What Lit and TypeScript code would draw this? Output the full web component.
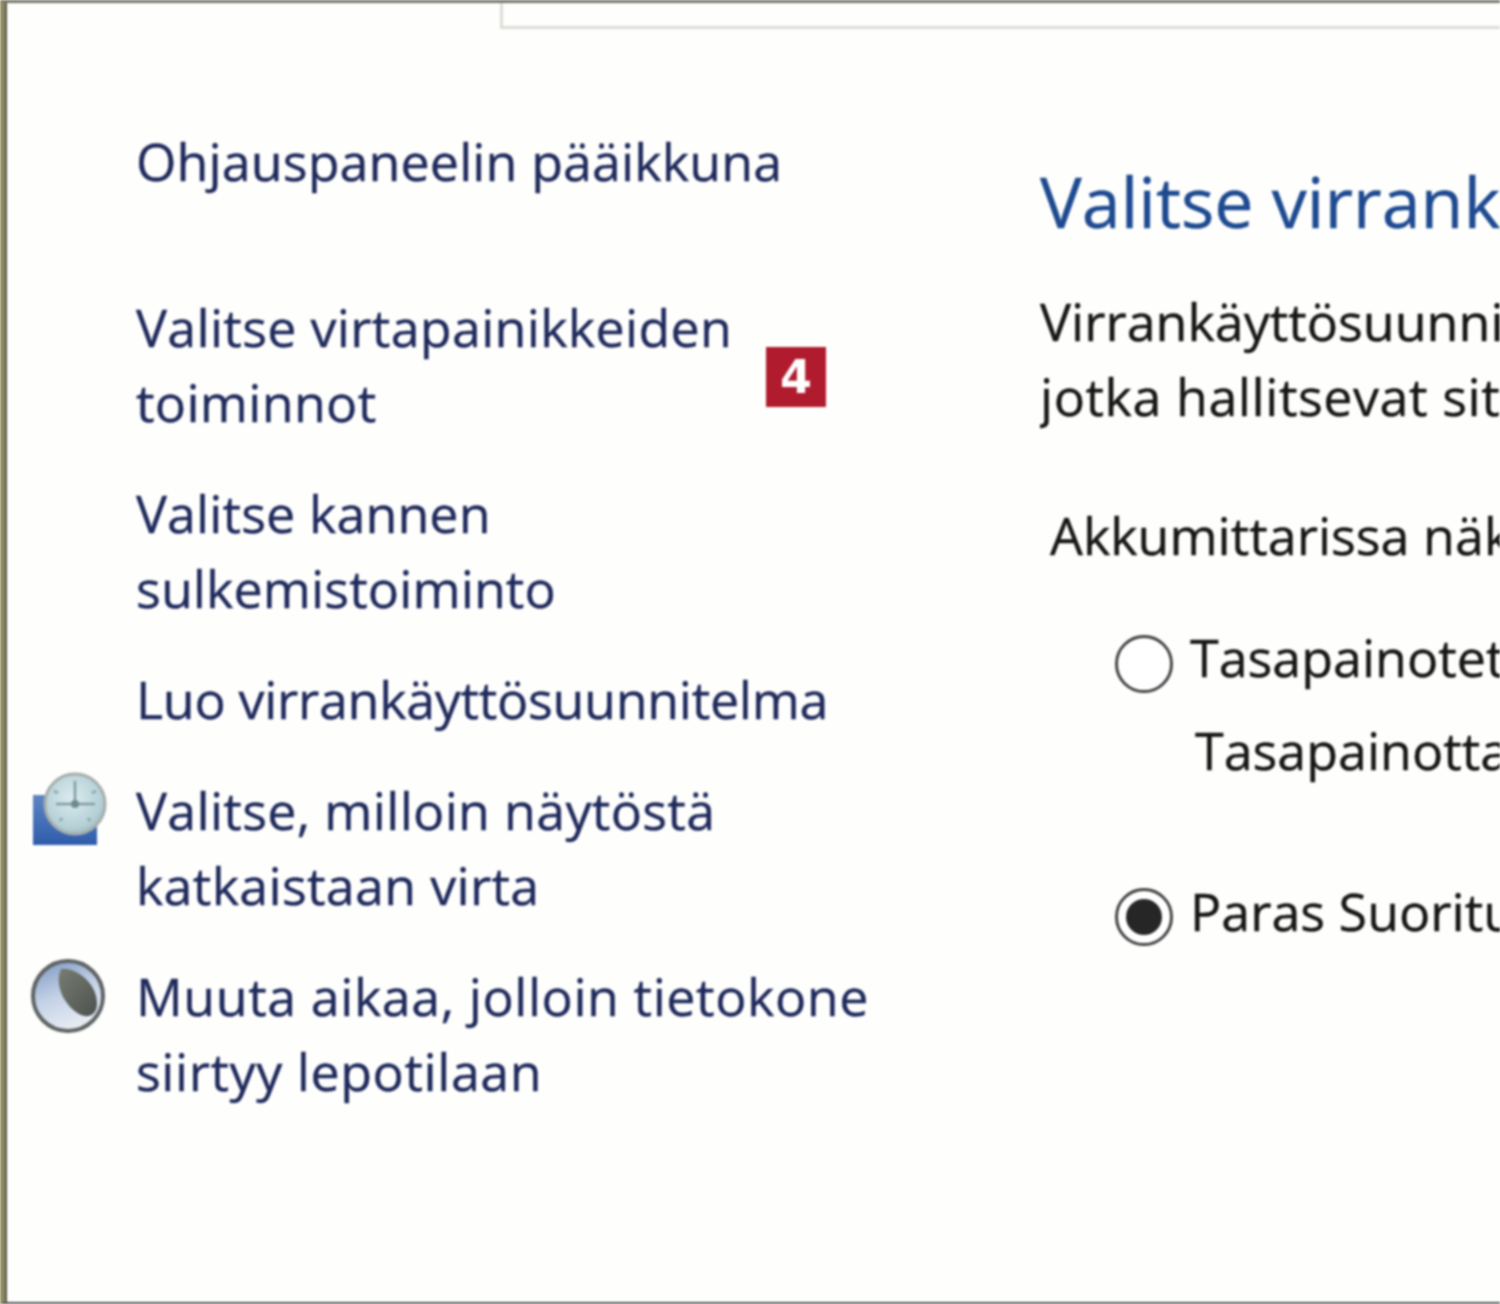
import { LitElement, html, css, svg } from 'lit';
import { customElement } from 'lit/decorators.js';

const clockIcon = svg`
  <svg class="icon" viewBox="0 0 80 76" width="80" height="76">
    <defs>
      <linearGradient id="screen" x1="0" y1="0" x2="0" y2="1">
        <stop offset="0" stop-color="#5f86c4" />
        <stop offset="1" stop-color="#2f5cab" />
      </linearGradient>
      <radialGradient id="face" cx="0.45" cy="0.4" r="0.7">
        <stop offset="0" stop-color="#dcecef" />
        <stop offset="0.7" stop-color="#b4d0d6" />
        <stop offset="1" stop-color="#96adb1" />
      </radialGradient>
    </defs>
    <rect x="3" y="24" width="64" height="50" fill="url(#screen)" />
    <circle cx="45" cy="33" r="30" fill="url(#face)" stroke="#a6aeac" stroke-width="3" />
    <path d="M45 10V33M45 33H65M26 33H45" stroke="#7f9ca3" stroke-width="2.5" fill="none" />
    <circle cx="45" cy="33" r="4" fill="#6f8b92" />
    <path d="M24 20l4 2M30 50l2-3M60 50l-2-3M66 20l-4 2" stroke="#8eaab0" stroke-width="3" />
  </svg>
`;

const moonIcon = svg`
  <svg class="icon" viewBox="0 0 80 76" width="80" height="76">
    <defs>
      <linearGradient id="disc" x1="0" y1="0" x2="0.4" y2="1">
        <stop offset="0" stop-color="#7795c2" />
        <stop offset="0.55" stop-color="#c3d1e6" />
        <stop offset="1" stop-color="#e6ebf2" />
      </linearGradient>
      <linearGradient id="shade" x1="0" y1="0" x2="1" y2="1">
        <stop offset="0" stop-color="#777d70" />
        <stop offset="1" stop-color="#4d5150" />
      </linearGradient>
    </defs>
    <circle cx="38" cy="39" r="35" fill="url(#disc)" stroke="#5f6464" stroke-width="4" />
    <path d="M31 12C46 10 67 26 67 47C67 58 58 62 49 57C34 48 24 28 31 12Z" fill="url(#shade)" />
  </svg>
`;

@customElement('app-root')
export class AppRoot extends LitElement {
  static styles = css`
    :host {
      display: block;
      width: 1500px;
      height: 1304px;
      overflow: hidden;
      box-sizing: border-box;
      position: relative;
      background: #fefefc;
      border-top: 3px solid #77776c;
      border-bottom: 2px solid #4e5152;
      border-left: 5px solid #8f8a5e;
      font-family: 'Open Sans', 'Liberation Sans', sans-serif;
      filter: blur(1.1px);
    }

    .frame-line {
      position: absolute;
      left: 0;
      top: 0;
      bottom: 0;
      width: 2px;
      background: #55554f;
    }

    .tab-edge {
      position: absolute;
      left: 495px;
      top: -3px;
      width: 1000px;
      height: 26px;
      border-left: 3px solid #dcdcd8;
      border-bottom: 3px solid #dcdcd8;
    }

    .layout {
      display: flex;
      height: 100%;
    }

    .side {
      width: 1035px;
      flex: none;
      box-sizing: border-box;
      padding: 120px 0 0 25px;
      font-size: 52px;
      line-height: 75px;
      color: #1f2a5c;
      letter-spacing: 0.1px;
      -webkit-text-stroke: 0.4px #1f2a5c;
    }

    .item {
      display: grid;
      grid-template-columns: 76px 1fr;
      column-gap: 30px;
      margin-bottom: 36px;
      position: relative;
    }

    .item.home {
      margin-bottom: 91px;
    }

    .wide {
      letter-spacing: 0.55px;
    }

    .mid {
      letter-spacing: 0.3px;
    }

    .tight {
      letter-spacing: -0.3px;
    }

    .icon {
      display: block;
      margin-top: -1px;
    }

    .badge {
      position: absolute;
      left: 736px;
      top: 58px;
      width: 60px;
      height: 60px;
      background: #b01c2e;
      color: #fff;
      -webkit-text-stroke: 0;
      font-family: 'DejaVu Sans', sans-serif;
      font-weight: 700;
      font-size: 46px;
      line-height: 60px;
      text-align: center;
      letter-spacing: 0;
    }

    .main {
      flex: 1;
      min-width: 0;
      overflow: hidden;
      padding-top: 153px;
      font-size: 52px;
      line-height: 75px;
      color: #161616;
      -webkit-text-stroke: 0.4px #161616;
      white-space: nowrap;
    }

    h1 {
      margin: 0 0 37px;
      font-size: 70px;
      line-height: 90px;
      font-weight: 400;
      color: #1e4a91;
      -webkit-text-stroke: 0.4px #1e4a91;
    }

    p {
      margin: 0;
    }

    .meter {
      margin: 64px 0 0 10px;
    }

    .option {
      display: flex;
      align-items: flex-start;
      gap: 17px;
      margin-left: 75px;
    }

    .option.first {
      margin-top: 47px;
    }

    .option.second {
      margin-top: 86px;
    }

    .radio {
      flex: none;
      width: 58px;
      height: 58px;
      margin-top: 16px;
      box-sizing: border-box;
      border: 3px solid #444;
      border-radius: 50%;
      background: #fff;
      display: flex;
      align-items: center;
      justify-content: center;
    }

    .radio.on {
      margin-top: 15px;
    }

    .radio.on::after {
      content: '';
      width: 36px;
      height: 36px;
      border-radius: 50%;
      background: #262626;
    }

    .desc {
      margin: 18px 0 0 155px;
    }
  `;

  render() {
    return html`
      <div class="frame-line"></div>
      <div class="tab-edge"></div>
      <div class="layout">
        <nav class="side">
          <div class="item home"><span></span><span>Ohjauspaneelin pääikkuna</span></div>
          <div class="item">
            <span></span><span class="mid">Valitse virtapainikkeiden<br />toiminnot</span>
            <span class="badge">4</span>
          </div>
          <div class="item"><span></span><span>Valitse kannen<br />sulkemistoiminto</span></div>
          <div class="item"><span></span><span class="tight">Luo virrankäyttösuunnitelma</span></div>
          <div class="item">${clockIcon}<span class="mid">Valitse, milloin näytöstä<br />katkaistaan virta</span></div>
          <div class="item">${moonIcon}<span class="wide">Muuta aikaa, jolloin tietokone<br />siirtyy lepotilaan</span></div>
        </nav>
        <section class="main">
          <h1>Valitse virrankäyttösuunnitelma</h1>
          <p>Virrankäyttösuunnitelmat</p>
          <p class="wide">jotka hallitsevat sitä</p>
          <p class="meter">Akkumittarissa näkyvät</p>
          <div class="option first"><span class="radio"></span><span>Tasapainotettu</span></div>
          <p class="desc">Tasapainottaa</p>
          <div class="option second"><span class="radio on"></span><span>Paras Suorituskyky</span></div>
        </section>
      </div>
    `;
  }
}
